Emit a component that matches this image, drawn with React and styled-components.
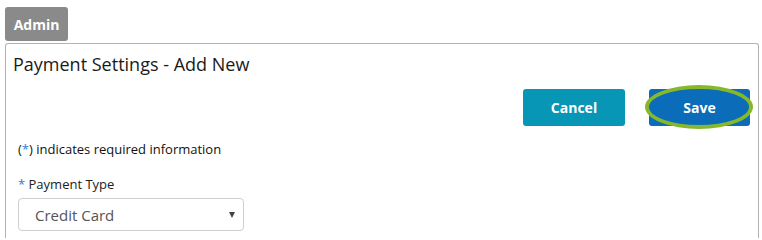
import React from 'react';
import styled, { createGlobalStyle } from 'styled-components';

const GlobalStyle = createGlobalStyle`
  body {
    margin: 0;
    background: #fff;
    font-family: "Open Sans", "Liberation Sans", sans-serif;
    color: #222;
  }
`;

const Page = styled.div`
  width: 762px;
  height: 238px;
  overflow: hidden;
  padding: 7px 3px 0 5px;
  box-sizing: border-box;
`;

const Tab = styled.div`
  width: 63px;
  height: 34px;
  display: flex;
  align-items: center;
  justify-content: center;
  background: #8a8a8a;
  color: #fff;
  font-size: 14px;
  font-weight: 700;
  border-radius: 3px;
  margin-bottom: 2px;
`;

const Panel = styled.section`
  border: 1px solid #b3b3b3;
  border-radius: 3px 3px 0 0;
  border-bottom: none;
  height: 200px;
  padding: 8px 8px 0 12px;
  box-sizing: border-box;
`;

const Title = styled.h2`
  margin: 0 0 0 -5px;
  font-size: 18px;
  font-weight: 400;
  line-height: 24px;
  color: #1a1a1a;
`;

const Actions = styled.div`
  display: flex;
  justify-content: flex-end;
  gap: 24px;
  margin-top: 13px;
`;

const Button = styled.button`
  position: relative;
  width: ${p => p.$w}px;
  height: 37px;
  border: none;
  border-radius: 3px;
  background: ${p => p.$bg};
  color: #fff;
  font-family: inherit;
  font-size: 14px;
  font-weight: 700;
  cursor: pointer;
`;

const Highlight = styled.span`
  position: absolute;
  left: -4px;
  right: -3px;
  top: -4px;
  bottom: -3px;
  border: 4px solid #86b82a;
  border-radius: 50%;
  pointer-events: none;
`;

const Note = styled.p`
  margin: 14px 0 0 0;
  font-size: 13px;
  font-weight: 400;
  line-height: 18px;
  color: #111;
`;

const Star = styled.span`
  color: #2a7fd4;
`;

const Field = styled.div`
  margin-top: 17px;
  display: flex;
  flex-direction: column;
  gap: 5px;
`;

const Label = styled.label`
  font-size: 13px;
  line-height: 18px;
  color: #222;
`;

const Select = styled.div`
  width: 226px;
  height: 33px;
  box-sizing: border-box;
  border: 1px solid #cfcfcf;
  border-radius: 4px;
  display: flex;
  align-items: center;
  justify-content: space-between;
  padding: 0 8px 0 16px;
  font-size: 15px;
  color: #555;
`;

const Caret = styled.span`
  width: 0;
  height: 0;
  border-left: 3px solid transparent;
  border-right: 3px solid transparent;
  border-top: 6px solid #444;
`;

export default function App() {
  return (
    <>
      <GlobalStyle />
      <Page>
        <Tab>Admin</Tab>
        <Panel>
          <Title>Payment Settings - Add New</Title>
          <Actions>
            <Button $w={102} $bg="#0796b5">Cancel</Button>
            <Button $w={101} $bg="#0b6db9">
              Save
              <Highlight />
            </Button>
          </Actions>
          <Note>
            (<Star>*</Star>) indicates required information
          </Note>
          <Field>
            <Label><Star>*</Star> Payment Type</Label>
            <Select>
              Credit Card
              <Caret />
            </Select>
          </Field>
        </Panel>
      </Page>
    </>
  );
}
